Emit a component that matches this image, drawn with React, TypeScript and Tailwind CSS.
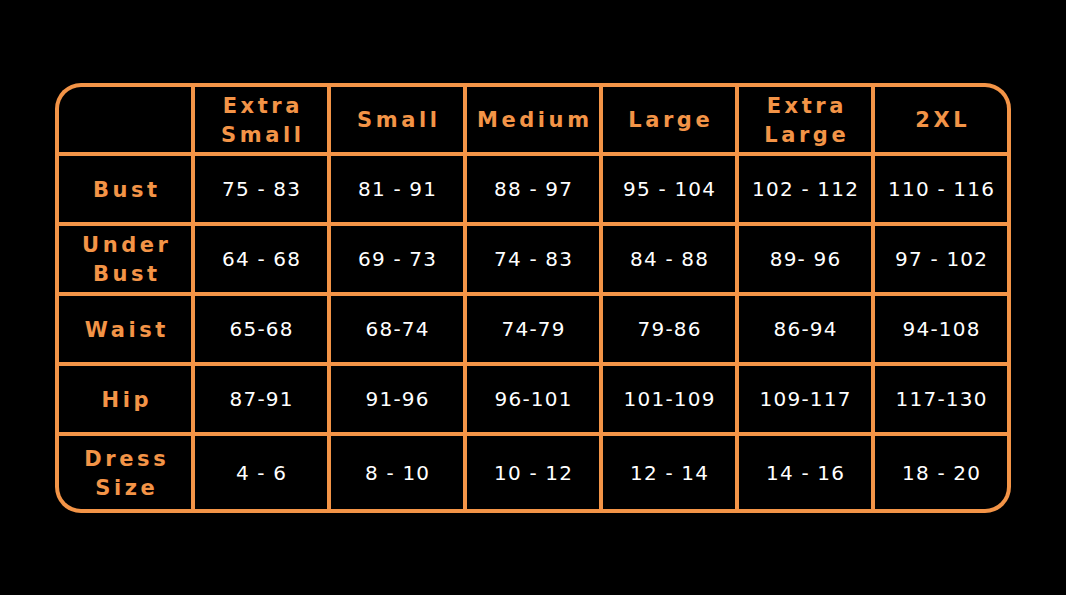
import React from 'react';

const sizes = [['Extra', 'Small'], ['Small'], ['Medium'], ['Large'], ['Extra', 'Large'], ['2XL']];

const rows: { label: string[]; values: string[] }[] = [
  { label: ['Bust'], values: ['75 - 83', '81 - 91', '88 - 97', '95 - 104', '102 - 112', '110 - 116'] },
  { label: ['Under', 'Bust'], values: ['64 - 68', '69 - 73', '74 - 83', '84 - 88', '89- 96', '97 - 102'] },
  { label: ['Waist'], values: ['65-68', '68-74', '74-79', '79-86', '86-94', '94-108'] },
  { label: ['Hip'], values: ['87-91', '91-96', '96-101', '101-109', '109-117', '117-130'] },
  { label: ['Dress', 'Size'], values: ['4 - 6', '8 - 10', '10 - 12', '12 - 14', '14 - 16', '18 - 20'] },
];

const Label: React.FC<{ lines: string[] }> = ({ lines }) => (
  <div className="bg-black flex flex-col items-center justify-center pt-[2px] text-[#f39447] font-bold text-[21px] leading-[29px] tracking-[0.17em] pl-[0.17em]">
    {lines.map((l) => (
      <span key={l}>{l}</span>
    ))}
  </div>
);

const App: React.FC = () => {
  return (
    <div
      className="w-[1066px] h-[595px] bg-black pt-[83px] pl-[55px]"
      style={{ fontFamily: '"DejaVu Sans", "Open Sans", sans-serif' }}
    >
      <div className="w-[956px] rounded-[26px] overflow-hidden bg-[#f39447] p-[4px]">
        <div className="grid grid-cols-7 gap-[4px] grid-rows-[65px_66px_66px_66px_66px_73px] rounded-[22px] overflow-hidden">
          <div className="bg-black" />
          {sizes.map((s, i) => (
            <Label key={i} lines={s} />
          ))}
          {rows.map((r) => (
            <React.Fragment key={r.label.join(' ')}>
              <Label lines={r.label} />
              {r.values.map((v, i) => (
                <div
                  key={i}
                  className="bg-black flex items-center justify-center text-white text-[20px] tracking-[0.06em] pl-[0.06em]"
                >
                  {v}
                </div>
              ))}
            </React.Fragment>
          ))}
        </div>
      </div>
    </div>
  );
};

export default App;
